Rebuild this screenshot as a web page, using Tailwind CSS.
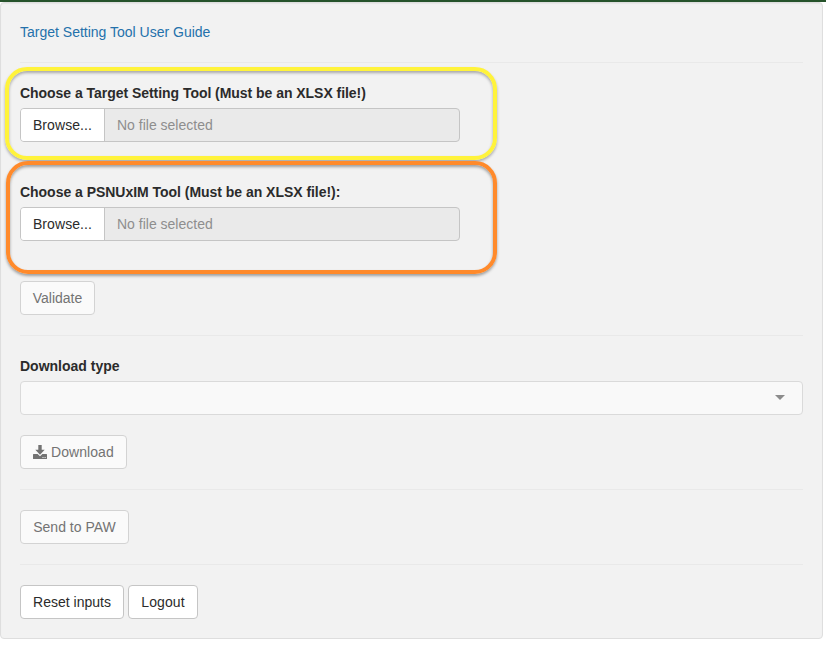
<!DOCTYPE html>
<html lang="en">
<head>
<meta charset="utf-8">
<title>Target Setting Tool</title>
<script src="https://cdn.jsdelivr.net/npm/@tailwindcss/browser@4"></script>
</head>
<body class="relative h-[646px] overflow-hidden bg-white font-['Liberation_Sans',Arial,sans-serif] text-sm text-[#2b2b2b]">
<div class="h-0.5 bg-[#26532b]"></div>
<main class="flex h-[637px] w-[823px] flex-col items-start rounded border border-[#dedede] bg-[#f2f2f2] px-[19px] pt-[19px] shadow-[inset_0_1px_1px_rgba(0,0,0,0.05)]">
  <a class="text-[#2471ab]">Target Setting Tool User Guide</a>
  <hr class="mt-5 w-full border-[#e9e9e9]">

  <label class="mt-5 font-bold tracking-[-0.04px]">Choose a Target Setting Tool (Must be an XLSX file!)</label>
  <div class="mt-[5px] flex h-[34px] w-[440px] overflow-hidden rounded border border-[#c5c5c5] bg-[#eaeaea]">
    <button class="w-[84px] border-r border-[#c5c5c5] bg-white tracking-[0.08px]">Browse...</button>
    <span class="flex items-center pl-3 text-[#8e8e8e]">No file selected</span>
  </div>

  <label class="mt-10 font-bold tracking-[-0.03px]">Choose a PSNUxIM Tool (Must be an XLSX file!):</label>
  <div class="mt-[5px] flex h-[34px] w-[440px] overflow-hidden rounded border border-[#c5c5c5] bg-[#eaeaea]">
    <button class="w-[84px] border-r border-[#c5c5c5] bg-white tracking-[0.08px]">Browse...</button>
    <span class="flex items-center pl-3 text-[#8e8e8e]">No file selected</span>
  </div>

  <button class="mt-10 h-[34px] w-[75px] rounded border border-[#d3d3d3] bg-[#fafafa] text-[#737373]">Validate</button>
  <hr class="mt-5 w-full border-[#e9e9e9]">

  <label class="mt-5 font-bold">Download type</label>
  <div class="mt-[5px] flex h-[34px] w-full items-center justify-end rounded border border-[#dadada] bg-[#f9f9f9] pr-[17px]">
    <svg class="mb-px h-[5px] w-[10px]" viewBox="0 0 10 5"><path d="M0 0h10L5 5z" fill="#8c8c8c"/></svg>
  </div>
  <button class="mt-5 flex h-[34px] w-[107px] items-center gap-1 rounded border border-[#d3d3d3] bg-[#fafafa] pl-3 text-[#737373]">
    <svg class="h-3.5 w-3.5" viewBox="0 0 14 14" fill="#737373"><path d="M5.300 0h3.400v4.700h3L7 9.700 2.300 4.700h3z"/><path d="M.6 9h4L7 11.300 9.400 9h4q.6 0 .6.600v3.800q0 .6-.6.600H.6q-.6 0-.6-.6V9.600Q0 9 .6 9zM9.500 12v1h1v-1zM11.600 12v1h1v-1z" fill-rule="evenodd"/></svg>
    <span class="tracking-[0.06px]">Download</span>
  </button>
  <hr class="mt-5 w-full border-[#e9e9e9]">

  <button class="mt-5 h-[34px] w-[109px] rounded border border-[#d3d3d3] bg-[#fafafa] text-[#737373]">Send to PAW</button>
  <hr class="mt-5 w-full border-[#e9e9e9]">

  <div class="mt-5 flex gap-1">
    <button class="h-[34px] w-[104px] rounded border border-[#c5c5c5] bg-white">Reset inputs</button>
    <button class="h-[34px] w-[70px] rounded border border-[#c5c5c5] bg-white tracking-[0.08px]">Logout</button>
  </div>
</main>

<!-- highlight frames -->
<div class="pointer-events-none absolute left-[5px] top-[67px] h-[93px] w-[492px] rounded-[22px] border-4 border-[#fff33b] shadow-[0_2px_3px_rgba(0,0,0,0.3),inset_0_2px_3px_rgba(0,0,0,0.3)]"></div>
<div class="pointer-events-none absolute left-[6px] top-[161px] h-[113px] w-[491px] rounded-[22px] border-4 border-[#ff8a2b] shadow-[0_2px_3px_rgba(0,0,0,0.35),inset_0_2px_3px_rgba(0,0,0,0.35)]"></div>
</body>
</html>
